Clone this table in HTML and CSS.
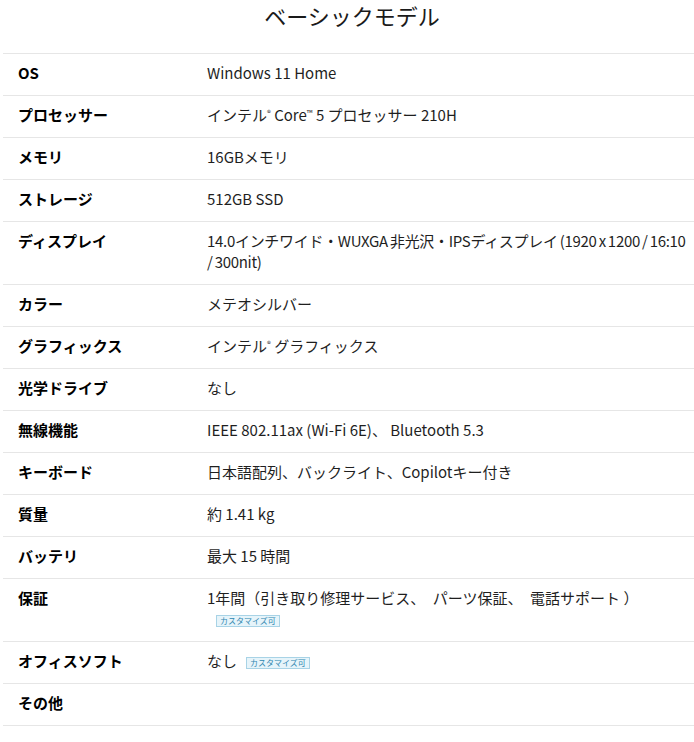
FILE: index.html
```html
<!DOCTYPE html>
<html lang="ja">
<head>
<meta charset="utf-8">
<title>ベーシックモデル</title>
<link rel="stylesheet" href="styles.css">
</head>
<body>
<div class="wrap">
  <h1 class="title">ベーシックモデル</h1>
  <div class="spec">
    <div class="row"><div class="label">OS</div><div class="value">Windows 11 Home</div></div>
    <div class="row"><div class="label">プロセッサー</div><div class="value">インテル<sup class="mark">®</sup> Core<sup class="mark">™</sup> 5 プロセッサー 210H</div></div>
    <div class="row"><div class="label">メモリ</div><div class="value">16GBメモリ</div></div>
    <div class="row"><div class="label">ストレージ</div><div class="value">512GB SSD</div></div>
    <div class="row"><div class="label">ディスプレイ</div><div class="value value-tight">14.0インチワイド・WUXGA 非光沢・IPSディスプレイ (1920 x 1200 / 16:10 / 300nit)</div></div>
    <div class="row"><div class="label">カラー</div><div class="value">メテオシルバー</div></div>
    <div class="row"><div class="label">グラフィックス</div><div class="value">インテル<sup class="mark">®</sup> グラフィックス</div></div>
    <div class="row"><div class="label">光学ドライブ</div><div class="value">なし</div></div>
    <div class="row"><div class="label">無線機能</div><div class="value">IEEE 802.11ax (Wi-Fi 6E)、 Bluetooth 5.3</div></div>
    <div class="row"><div class="label">キーボード</div><div class="value">日本語配列、バックライト、Copilotキー付き</div></div>
    <div class="row"><div class="label">質量</div><div class="value">約 1.41 kg</div></div>
    <div class="row"><div class="label">バッテリ</div><div class="value">最大 15 時間</div></div>
    <div class="row"><div class="label">保証</div><div class="value">1年間（引き取り修理サービス、　パーツ保証、　電話サポート ）<span class="badge">カスタマイズ可</span></div></div>
    <div class="row"><div class="label">オフィスソフト</div><div class="value">なし<span class="badge">カスタマイズ可</span></div></div>
    <div class="row"><div class="label">その他</div><div class="value"></div></div>
  </div>
</div>
</body>
</html>
```
FILE: styles.css
```css
html {
  overflow: hidden;
}
body {
  margin: 0;
  background: #fff;
  font-family: "Noto Sans CJK JP", "Noto Sans", sans-serif;
  color: #1a1a1a;
}
.wrap {
  margin-left: 3px;
  width: 698px;
}
.title {
  margin: 0 0 23px;
  font-size: 22px;
  line-height: 30px;
  font-weight: 400;
  text-align: center;
  color: #1a1a1a;
}
.spec {
  border-top: 1px solid #e6e6e6;
}
.row {
  display: grid;
  grid-template-columns: 189px 1fr;
  padding: 8px 15px 12px;
  border-bottom: 1px solid #e6e6e6;
  font-size: 15px;
  line-height: 21px;
  min-height: 21px;
}
.label {
  font-weight: 700;
  color: #000;
}
.value {
  color: #1f1f1f;
}
.value-tight {
  letter-spacing: -0.3px;
  word-spacing: -1px;
}
.mark {
  font-size: 8px;
  line-height: 0;
  vertical-align: 5px;
}
.badge {
  display: inline-block;
  margin-left: 9px;
  padding: 0 3px;
  font-size: 8px;
  line-height: 10px;
  color: #2f86b0;
  background: #e6f4fa;
  border: 1px solid #a8d3e6;
  vertical-align: middle;
}
```
